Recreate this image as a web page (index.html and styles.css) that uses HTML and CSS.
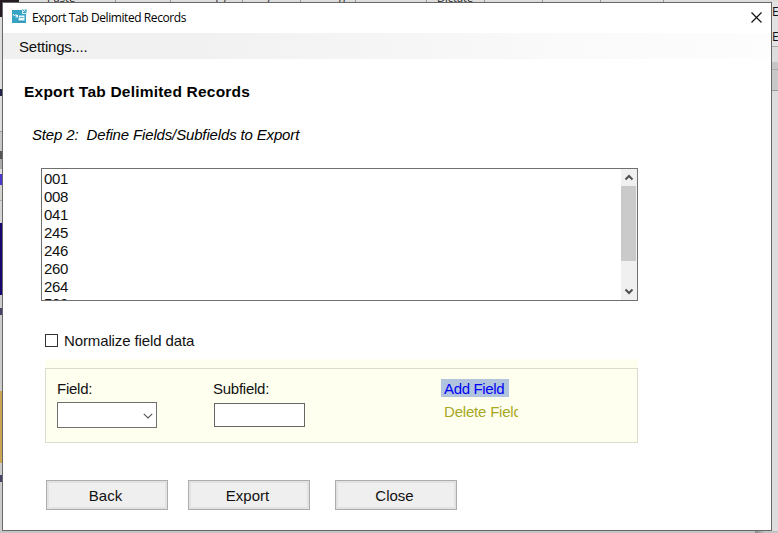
FILE: index.html
```html
<!DOCTYPE html>
<html lang="en">
<head>
<meta charset="utf-8">
<title>Export Tab Delimited Records</title>
<link rel="stylesheet" href="styles.css">
</head>
<body>
<div class="desktop">
  <div class="strip-top"><span class="dark"></span><span class="peek p1">Paste</span><span class="peek p2">Copy</span><span class="peek p3">y</span><span class="peek p4">g</span><span class="peek p5">Dictate</span></div>
  <div class="strip-left"><i class="l-dark"></i><i class="l-gray"></i><i class="l-link"></i><i class="l-light"></i><i class="l-navy"></i><i class="l-light2"></i><i class="l-gold"></i><i class="l-rest"></i></div>
  <main class="window">
    <header class="titlebar">
      <svg class="app-icon" viewBox="0 0 15 15"><path d="M0 1h10v3h4v10H0z" fill="#35a3c4"/><path d="M10 0h5v5h-5z" fill="#cfeaf2"/><path d="M10.500 .5l3 3M14 .5v3h-3M11 4l3-3" stroke="#37a6c5" fill="none"/><path d="M1 5l1.500 2L4 5.500 5.500 8M3.500 8h2V6" stroke="#fff" fill="none"/><path d="M7 6.500h5.500v5H6.500z" fill="#e8f7fb"/><path d="M7.500 8.500h4" stroke="#5fb4cb"/><path d="M5 12.500h7" stroke="#398fa9"/></svg>
      <span class="title">Export Tab Delimited Records</span>
      <svg class="close" viewBox="0 0 11 11"><path d="M.5.5l10 10M10.500.5l-10 10" stroke="#111" stroke-width="1.200"/></svg>
    </header>
    <nav class="menu"><span>Settings....</span></nav>
    <h1>Export Tab Delimited Records</h1>
    <h2>Step 2:&nbsp; Define Fields/Subfields to Export</h2>
    <div class="listbox">
      <ul><li>001</li><li>008</li><li>041</li><li>245</li><li>246</li><li>260</li><li>264</li><li class="partial">500</li></ul>
      <div class="scroll">
        <svg viewBox="0 0 16 17"><path d="M4.500 10.500L8 7l3.500 3.500" fill="none" stroke="#505050" stroke-width="2"/></svg>
        <div class="thumb"></div>
        <svg viewBox="0 0 16 17"><path d="M4.500 6.500L8 10l3.500-3.500" fill="none" stroke="#505050" stroke-width="2"/></svg>
      </div>
    </div>
    <label class="check"><span class="box"></span><span class="check-text">Normalize field data</span></label>
    <section class="group">
      <div class="fields">
        <div class="col field"><span class="label">Field:</span><div class="combo"><svg viewBox="0 0 10 6"><path d="M.8.8L5 5 9.200.8" fill="none" stroke="#555" stroke-width="1.100"/></svg></div></div>
        <div class="col subfield"><span class="label">Subfield:</span><div class="input"></div></div>
        <div class="links"><span class="add">Add Field</span><span class="delete">Delete Field</span></div>
      </div>
    </section>
    <footer><div class="button">Back</div><div class="button">Export</div><div class="button last">Close</div></footer>
  </main>
  <aside class="strip-right"><span>E</span><span>E</span></aside>
  <div class="strip-bottom"></div>
</div>
</body>
</html>
```
FILE: styles.css
```css
* { box-sizing: border-box; }
body { margin: 0; overflow: hidden; background: #ccc; font-family: "Liberation Sans", Arial, sans-serif; font-size: 15px; color: #111; }
svg { display: block; flex: none; }
.desktop { width: 778px; height: 533px; display: grid; grid-template: 2px 529px 2px / 2px 770px 6px; }
.strip-top { grid-column: 1 / 4; position: relative; overflow: hidden; background: linear-gradient(90deg, transparent 115px, #999 115px 116px, transparent 116px 170px, #999 170px 171px, transparent 171px 242px, #999 242px 243px, transparent 243px 300px, #999 300px 301px, transparent 301px 355px, #999 355px 356px, transparent 356px 426px, #999 426px 427px, transparent 427px 484px, #999 484px 485px, transparent 485px 542px, #999 542px 543px, transparent 543px 600px, #999 600px 601px, transparent 601px 663px, #999 663px 664px, transparent 664px), #ddd; }
.dark { display: block; width: 19px; height: 2px; background: #251b22; }
.peek { position: absolute; bottom: -1px; font: 11px/11px "Open Sans", sans-serif; color: #222; }
.p1 { left: 47px; }
.p2 { left: 202px; bottom: 1px; }
.p3 { left: 266px; bottom: 1px; }
.p4 { left: 339px; bottom: 1px; }
.p5 { left: 437px; }
.strip-left { display: flex; flex-direction: column; background: #ccc; overflow: hidden; }
.l-dark { height: 15px; background: #251b22; }
.l-gray { height: 157px; background: linear-gradient(#ddd 0 72px, #224 72px 79px, #ddd 79px 114px, #999 114px 115px, #c7c7c7 115px 134px, #555 134px 142px, #aaa 142px 152px, #ddd 152px); }
.l-link { height: 11px; background: #4838d0; }
.l-light { height: 38px; background: linear-gradient(#d4d2cf 0 15px, #aaa 15px 16px, #d4d4d4 16px); }
.l-navy { height: 72px; background: #17066d; }
.l-light2 { height: 96px; background: linear-gradient(#ccc 0 13px, #446 13px 20px, #ccc 20px); }
.l-gold { height: 72px; background: #cba552; }
.l-rest { flex: 1; background: linear-gradient(#ccc 0 12px, #446 12px 19px, #ccc 19px); }
.window { display: flex; flex-direction: column; align-items: flex-start; background: #fff; border: 1px solid #686868; overflow: hidden; white-space: nowrap; }
.titlebar { width: 100%; height: 30px; display: flex; align-items: center; padding: 0 9px 0 9px; }
.app-icon { width: 15px; height: 15px; margin-top: -3px; }
.title { margin: -1px auto 0 5px; font: 12px/16px "Open Sans", "Noto Sans", sans-serif; letter-spacing: -.42px; color: #000; }
.close { width: 11px; height: 11px; margin-top: -2px; }
.menu { width: 100%; height: 26px; padding: 5px 0 0 16px; line-height: 18px; letter-spacing: -.2px; background: linear-gradient(90deg, #f0f0f0, #f1f1f1 25%, #fafafa 75%, #fdfdfd); }
h1, h2 { margin: 0; font-size: 15px; line-height: 18px; color: #000; }
h1 { margin: 24px 0 0 21px; font-size: 15.5px; letter-spacing: .21px; }
h2 { margin: 25px 0 0 29px; font-weight: 400; font-style: italic; letter-spacing: -.15px; }
.listbox { width: 597px; height: 133px; margin: 24px 0 0 38px; border: 1px solid #707070; display: flex; justify-content: space-between; overflow: hidden; }
ul { list-style: none; margin: 1px 0 0 2px; padding: 0; line-height: 18px; letter-spacing: -.3px; }
.partial { margin-top: -1px; }
.scroll { width: 16px; height: 131px; display: flex; flex-direction: column; background: #f0f0f0; }
.scroll svg { width: 16px; height: 17px; }
.thumb { width: 15px; height: 75px; margin-bottom: auto; background: #cacaca; }
.check { display: flex; align-items: center; height: 18px; margin: 30px 0 0 42px; letter-spacing: -.12px; }
.box { width: 13px; height: 13px; border: 1px solid #333; margin-right: 6px; }
.group { width: 593px; height: 84px; margin: 10px 0 0 42px; padding-top: 9px; background: #fffff0; }
.fields { height: 75px; border: 1px solid #dcdccb; display: flex; }
.col { padding-top: 11px; }
.label { display: block; line-height: 18px; letter-spacing: -.25px; }
.field { width: 156px; padding-left: 11px; }
.subfield { width: 228px; padding-left: 11px; }
.combo { width: 100px; height: 26px; margin-top: 4px; border: 1px solid #707070; background: #fff; display: flex; align-items: center; justify-content: flex-end; padding: 2px 3px 0 0; }
.combo svg { width: 10px; height: 6px; }
.input { width: 91px; height: 24px; margin: 5px 0 0 1px; border: 1px solid #666; background: #fff; }
.links { display: flex; flex-direction: column; align-items: flex-start; padding-top: 10px; margin-left: 11px; }
.add { width: 68px; height: 18px; padding-left: 3px; line-height: 20px; letter-spacing: -.35px; background: #b0c4de; color: #0000f5; }
.delete { width: 77px; height: 20px; margin-top: 5px; padding-left: 3px; line-height: 20px; letter-spacing: -.2px; color: #a7a723; overflow: hidden; }
footer { display: flex; gap: 20px; margin: 37px 0 0 43px; }
.button { width: 122px; height: 30px; border: 1px solid #adadad; box-shadow: inset 0 0 0 2px #e2e2e2; background: #efefef; line-height: 29px; text-align: center; padding-right: 3px; }
.last { margin-left: 5px; }
.strip-right { display: flex; flex-direction: column; overflow: hidden; font: 12px/16px "Open Sans", sans-serif; background: linear-gradient(#e2e2e2 0 44px, #aaa 44px 45px, #ddd 45px 60px, #c6c6c6 60px 67px, #aaa 67px 68px, #c8c8c8 68px 88px, #999 88px 89px, #ddd 89px); }
.strip-right span { margin-top: 2px; margin-bottom: 7px; }
.strip-bottom { grid-column: 1 / 4; background: linear-gradient(90deg, #c4c4c4 755px, #888 755px, #c4c4c4 765px); }
```
